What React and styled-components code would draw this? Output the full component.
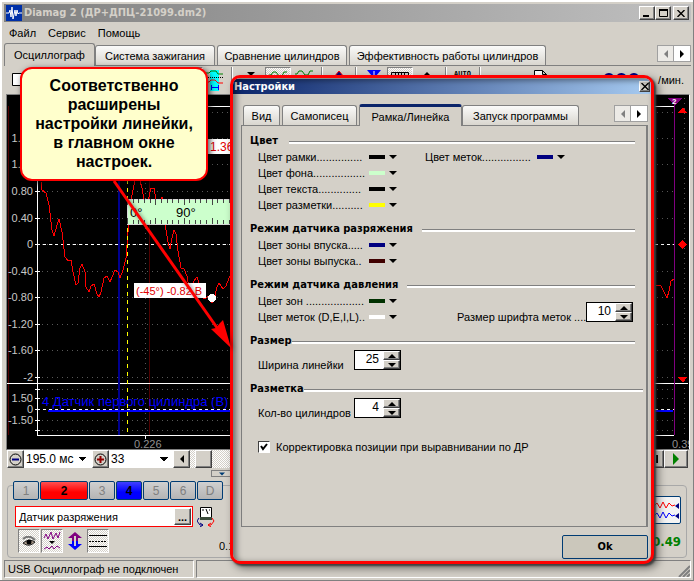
import React, { useState } from 'react';
import styled, { createGlobalStyle, css } from 'styled-components';

const theme = {
   face: '#d4d0c8',
   shadow: '#808080',
   dark: '#404040',
   navy: '#0a246a',
   red: '#ff0000',
   steel: '#003c74',
};

const uiFont = '"Liberation Sans", Arial, sans-serif';
const boldFont = '"DejaVu Sans Condensed", "DejaVu Sans", Verdana, sans-serif';

const raised = css`
   border: 1px solid;
   border-color: #fff ${theme.dark} ${theme.dark} #fff;
   box-shadow: inset -1px -1px 0 ${theme.shadow};
`;

const hatch = css`
   background: repeating-conic-gradient(#fff 0 25%, ${theme.face} 0 50%) 0 0 / 2px 2px;
`;

const GlobalStyle = createGlobalStyle`
   * { box-sizing: border-box; }
   body {
      margin: 0;
      background: ${theme.face};
      color: #000;
      font: 11px/16px ${uiFont};
   }
   button, input, select { font: inherit; color: inherit; }
   button { padding: 0; border: 0; background: ${theme.face}; }
   svg { display: block; }
`;

/* main window */

const Window = styled.div`
   position: relative;
   display: flex;
   flex-direction: column;
   min-height: 100vh;
   padding: 4px 2px 2px 4px;
   overflow: hidden;
   border: solid ${theme.shadow};
   border-width: 0 1px 1px 0;
   box-shadow: inset 0 2px 0 #fff, inset 2px 0 0 #fff;
`;

const TitleBar = styled.header`
   display: flex;
   align-items: center;
   height: 18px;
   padding: 0 2px;
   background: linear-gradient(90deg, #808080, #c0c0c0);
   color: ${theme.face};

   h1 {
      flex: 1;
      margin: 0 0 0 2px;
      font: bold 11px/18px ${boldFont};
      white-space: nowrap;
   }
`;

const CaptionButton = styled.button`
   ${raised};
   display: grid;
   place-items: center;
   width: 16px;
   height: 14px;
   background: ${theme.face};

   &:last-child {
      margin-left: 2px;
   }
`;

const Menu = styled.nav`
   display: flex;
   gap: 12px;
   height: 21px;
   padding: 3px 5px;

   a {
      color: #000;
      text-decoration: none;
   }
`;

const TabBar = styled.div`
   display: flex;
   align-items: flex-end;
   height: 23px;
   border-bottom: 1px solid ${theme.shadow};

   ${({ $dialog }) => $dialog && css`
      padding-left: 2px;
   `}
`;

const Tab = styled.button`
   flex: none;
   width: ${({ $w }) => $w}px;
   height: 20px;
   margin-right: 2px;
   border: 1px solid ${theme.shadow};
   border-bottom: 0;
   border-radius: 3px 3px 0 0;
   background: linear-gradient(#fafaf9, #d9d6cf);
   white-space: nowrap;

   ${({ $active }) => $active && css`
      height: 23px;
      margin: 0 0 -1px;
      background: ${theme.face};
   `}
   ${({ $active, $dialog }) => $active && $dialog && css`
      border-top: 3px solid ${theme.navy};
      height: 22px;
   `}
`;

const TabScroll = styled.div`
   display: flex;
   align-self: flex-start;
   margin: 2px 0 0 auto;

   button {
      display: grid;
      place-items: center;
      width: 17px;
      height: 17px;
      border: 1px solid #a0a0a0;
      background: #eceae6;
   }
   button + button {
      border-left: 0;
      background: #fff;
   }
`;

const Toolbar = styled.div`
   display: flex;
   align-items: flex-start;
   height: 28px;
   padding: 1px 0 0 3px;
   overflow: hidden;
`;

const Tool = styled.button`
   flex: none;
   width: ${({ $w }) => $w || 24}px;
   height: 26px;
   display: grid;
   place-items: start center;
   padding-top: 3px;

   ${({ $pressed }) => $pressed && css`
      ${hatch};
      border: 1px solid;
      border-color: ${theme.shadow} #fff #fff ${theme.shadow};
   `}
`;

const Divider = styled.span`
   flex: none;
   width: 2px;
   height: 24px;
   margin: 0 4px;
   border-left: 1px solid ${theme.shadow};
   border-right: 1px solid #fff;
`;

const Rpm = styled.output`
   flex: 1;
   display: flex;
   justify-content: flex-end;
   gap: 18px;
   padding-right: 7px;

   b {
      color: #000080;
      font: bold 18px/26px "DejaVu Sans", sans-serif;
   }
   span {
      line-height: 26px;
   }
`;

const Plot = styled.figure`
   margin: 0 1px 0 2px;
   border: 1px solid ${theme.shadow};
   border-right-color: #fff;
   background: #000;

   svg {
      width: 100%;
      height: auto;
   }
`;

const Transport = styled.div`
   display: flex;
   height: 19px;
   margin: 0 3px;
`;

const SmallButton = styled.button`
   ${raised};
   flex: none;
   display: grid;
   place-items: center;
   width: ${({ $w }) => $w || 17}px;
   height: 18px;
`;

const DropDown = styled.select`
   flex: none;
   width: ${({ $w }) => $w}px;
   height: 18px;
   padding: 0 2px;
   border: 0;
   border-radius: 0;
   appearance: none;
   font-size: 12px;
   background:
      linear-gradient(to top left, transparent 50%, #000 0) right 5px center / 4px 4px no-repeat,
      linear-gradient(to top right, transparent 50%, #000 0) right 9px center / 4px 4px no-repeat,
      #fff;
`;

const Track = styled.div`
   ${hatch};
   flex: 1;
   height: 18px;
   padding-left: 5px;
`;

const Splitter = styled.div`
   height: 11px;
   padding: 1px 0 0 207px;

   button {
      display: flex;
      align-items: center;
      justify-content: space-around;
      width: 40px;
      height: 7px;
      border: 1px solid ${theme.shadow};
   }
`;

/* channel controls */

const Channels = styled.section`
   position: relative;
   flex: 1;
   display: flex;
   margin: 5px 4px 2px 3px;
   padding: 20px 5px 3px 7px;
   border: 1px solid #a8a8a8;
   border-radius: 4px;
`;

const ChannelRow = styled.div`
   position: absolute;
   top: -5px;
   left: 5px;
   display: flex;
   gap: 1px;
   background: ${theme.face};
`;

const Channel = styled.button`
   width: ${({ $wide }) => ($wide ? 48 : 26)}px;
   height: 19px;
   border: 1px solid ${theme.steel};
   border-radius: 2px;
   background: ${({ $bg }) => $bg || 'linear-gradient(#d0d0d0, #b4b4b4)'};
   color: ${({ $bg }) => ($bg ? '#000' : theme.shadow)};
   font-size: 12px;
   font-weight: ${({ $bg }) => ($bg ? 'bold' : 'normal')};
`;

const ChannelSetup = styled.div`
   flex: 1;
`;

const SensorRow = styled.div`
   display: flex;
   gap: 4px;
   margin-bottom: 2px;
`;

const SensorBox = styled.div`
   display: flex;
   width: 178px;
   height: 21px;
   padding: 1px;
   border: 1px solid ${theme.red};
   background: #fff;

   input {
      flex: 1;
      min-width: 0;
      padding: 0 2px;
      border: 0;
      outline: 0;
   }
   button {
      height: 17px;
      font-weight: bold;
      line-height: 8px;
   }
`;

const ViewRow = styled.div`
   display: flex;
   gap: 1px;
   padding-left: 3px;

   ${Tool} {
      width: 22px;
      height: 24px;
      padding: 0;
      place-items: center;
   }
`;

const MinReading = styled.span`
   align-self: flex-end;
   margin-left: 109px;
   line-height: 13px;
   white-space: nowrap;
`;

const Readings = styled.div`
   display: flex;
   flex-direction: column;
   align-items: flex-end;
   justify-content: space-between;
   width: 48px;
   margin-top: -10px;

   b {
      color: #008000;
      font: bold 13px/24px ${boldFont};
   }
`;

const WaveButton = styled.button`
   width: 48px;
   height: 28px;
   border: 1px solid ${theme.steel};
   border-radius: 2px;
   background: #f4f4f4;
`;

const StatusBar = styled.footer`
   display: flex;
   gap: 2px;
   height: 18px;
`;

const StatusPane = styled.div`
   flex: ${({ $w }) => ($w ? `0 0 ${$w}px` : 1)};
   display: flex;
   justify-content: space-between;
   align-items: flex-end;
   padding-left: 3px;
   border: 1px solid;
   border-color: ${theme.shadow} #fff #fff ${theme.shadow};
   white-space: nowrap;
`;

/* settings dialog */

const Dialog = styled.section`
   position: absolute;
   top: 75px;
   left: 230px;
   right: 39px;
   padding: 1px 0 2px;
   overflow: hidden;
   border: 3px solid ${theme.red};
   border-radius: 10px;
   background: ${theme.face};
   box-shadow: 2px 2px 2px #404040, 4px 4px 8px rgba(0, 0, 0, 0.5);

   &::after {
      content: '';
      position: absolute;
      inset: 0;
      border-radius: 7px;
      box-shadow: inset 3px 2px 6px rgba(0, 0, 0, 0.5);
      pointer-events: none;
   }
`;

const DialogTitle = styled.header`
   display: flex;
   align-items: center;
   justify-content: space-between;
   height: 15px;
   padding: 0 1px;
   background: linear-gradient(90deg, ${theme.navy}, #a6caf0);
   color: #fff;

   h2 {
      margin: 0;
      font: bold 11px/15px ${boldFont};
   }
   ${CaptionButton} {
      width: 11px;
      height: 11px;
   }
`;

const DialogBody = styled.div`
   padding: 9px 3px 0 8px;
`;

const Panel = styled.div`
   min-height: 401px;
   padding: 7px 0 0 8px;
   border: 1px solid ${theme.shadow};
   border-top: 0;
   border-right-width: 2px;
`;

const Group = styled.section`
   margin-bottom: 8px;
`;

const GroupTitle = styled.h3`
   display: flex;
   align-items: center;
   gap: ${({ $gap }) => $gap}px;
   margin: 0 ${({ $end }) => $end || 11}px 0 0;
   font: bold 11px/16px ${boldFont};
   white-space: nowrap;

   &::after {
      content: '';
      flex: 1;
      height: 2px;
      margin-top: 3px;
      border-top: 1px solid ${theme.shadow};
      background: #fff;
   }
`;

const GroupBody = styled.div`
   display: flex;
   padding-left: 8px;
`;

const Column = styled.div`
   width: ${({ $w }) => ($w ? `${$w}px` : 'auto')};
`;

const ColorRow = styled.div`
   display: flex;
   align-items: center;
   height: 16px;

   label {
      width: ${({ $label }) => $label || 107}px;
      white-space: nowrap;
   }
`;

const ColorButton = styled.button`
   display: flex;
   align-items: center;
   gap: 4px;
   height: 16px;
   padding: 0 4px;

   &::before {
      content: '';
      width: 16px;
      height: 4px;
      background: ${({ $color }) => $color};
   }
`;

const Field = styled.div`
   display: flex;
   align-items: flex-end;
   height: ${({ $h }) => $h || 24}px;

   label {
      width: ${({ $label }) => $label}px;
      white-space: nowrap;
   }
`;

const Spinner = styled.div`
   display: flex;
   width: 47px;
   height: 20px;
   margin-bottom: 3px;
   border: 1px solid #000;
   background: #fff;

   input {
      flex: 1;
      min-width: 0;
      padding: 0 4px 2px 0;
      border: 0;
      outline: 0;
      font-size: 12px;
      text-align: right;
   }
   div {
      display: flex;
      flex-direction: column;
   }
   ${SmallButton} {
      height: 9px;
   }
`;

const CheckRow = styled.label`
   display: flex;
   align-items: center;
   gap: 6px;
   padding: 10px 0 0 8px;

   input {
      appearance: none;
      width: 12px;
      height: 12px;
      margin: 0;
      border: 1px solid;
      border-color: ${theme.dark} #fff #fff ${theme.dark};
      background: #fff;
   }
   input:checked {
      background: #fff url("data:image/svg+xml,%3Csvg xmlns='http://www.w3.org/2000/svg' viewBox='0 0 10 10'%3E%3Cpath d='M2 4l2 3 4-5' fill='none' stroke='black' stroke-width='2'/%3E%3C/svg%3E");
   }
`;

const OkRow = styled.div`
   display: flex;
   justify-content: flex-end;
   padding-top: 8px;
`;

const OkButton = styled.button`
   width: 86px;
   height: 24px;
   border: 1px solid ${theme.steel};
   border-radius: 2px;
   background: #cbc7bb;
   font: bold 11px/16px ${boldFont};
`;

/* callout over the plot */

const Callout = styled.aside`
   position: absolute;
   top: 67px;
   left: 20px;
   width: 188px;
   padding: 7px 7px 8px;
   border: 2px solid ${theme.red};
   border-radius: 12px;
   background: #ffffcc;
   box-shadow: 2px 2px 6px rgba(0, 0, 0, 0.7);
   font-size: 16px;
   font-weight: bold;
   line-height: 19px;
   text-align: center;
`;

const Arrow = styled.svg`
   position: absolute;
   top: 178px;
   left: 110px;
   filter: drop-shadow(2px 2px 2px rgba(0, 0, 0, 0.5));
`;

const Triangle = ({ dir = 'down', size = 8, color = '#000' }) => {
   const shapes = {
      down: 'M0 2h8l-4 4z',
      up: 'M0 6h8l-4-4z',
      left: 'M6 0v8l-4-4z',
      right: 'M2 0v8l4-4z',
   };
   return (
      <svg width={size} height={size} viewBox="0 0 8 8" aria-hidden="true">
         <path d={shapes[dir]} fill={color}/>
      </svg>
   );
};

const AppIcon = () => (
   <svg width="16" height="16" viewBox="0 0 16 16">
      <path fill="#0030a8" d="M0 0h16v16H0z"/>
      <path fill="none" stroke="#fff" d="M0 8h3l1-3 1 7 1-10 1 12 2-9 1 6 1-6 1 4 1-1h3"/>
   </svg>
);

const Close = () => (
   <svg width="8" height="7" viewBox="0 0 8 7">
      <path d="M.5 0l7 7m0-7l-7 7" stroke="#000" strokeWidth="1.4"/>
   </svg>
);

const ZoomIcon = ({ plus }) => (
   <svg width="13" height="13" viewBox="0 0 13 13">
      <circle cx="6.5" cy="6.5" r="5.5" fill="none" stroke="#000"/>
      <path d={plus ? 'M3 6.5h7M6.5 3v7' : 'M3 6.5h7'} stroke={plus ? '#900000' : '#000080'} strokeWidth="2"/>
   </svg>
);

const WavesIcon = ({ colors = ['#008000', '#008000'] }) => (
   <svg width="18" height="20" viewBox="0 0 18 20">
      <path d="M0 4h2l2-3h3l3 4h3l2-4h3" fill="none" stroke={colors[0]}/>
      <path d="M0 14h2l2-3 3 4h3l2-4 2 3h4" fill="none" stroke={colors[1]}/>
   </svg>
);

const ticks = [
   ['1.60', 138], ['1.20', 164], ['0.80', 191], ['0.40', 218], ['0', 244],
   ['-0.40', 271], ['-0.80', 297], ['-1.20', 324], ['-1.60', 350], ['-2', 377],
];
const lowTicks = [['', 389], ['1.50', 398], ['0', 409], ['-1.50', 420], ['', 430]];
const rulerTicks = Array.from({ length: 19 }, (_, i) => i);

const Oscillogram = () => (
   <Plot>
      <svg viewBox="7 95 682 354" fontFamily="Liberation Sans, Arial, sans-serif" fontSize="11" shapeRendering="crispEdges">
         <path d="M8.5 106v329M149.5 106v329" stroke="#500000"/>
         <g stroke="#585858" strokeDasharray="1 4">
            {[112, ...ticks.map((t) => t[1]), 389, 398, 420, 430].map((y) => (
               <path key={y} d={`M42 ${y}.5h632`}/>
            ))}
            <path d="M145.5 108v326M684.5 98v338"/>
         </g>
         <path d="M37.5 106v277M37 106.5h637M7 383.5h681M37 435.5h637M145.5 435v4" stroke="#fff" fill="none"/>
         <path d="M37.5 384v51" stroke="#fff"/>
         <g fill="#c8c8c8" textAnchor="end">
            {[...ticks, ...lowTicks].map(([label, y]) => (
               <g key={y}>
                  <path d={`M35 ${y}.5h5`} stroke="#fff"/>
                  <text x="33" y={y + 4}>{label}</text>
               </g>
            ))}
         </g>
         <path d="M118.5 100v335" stroke="#000090" strokeWidth="2"/>
         <text x="42" y="406" fill="#0000ff" fontSize="13">4 Датчик первого цилиндра (В)</text>
         <path d="M48 410.5h625" stroke="#0000ff" strokeWidth="2"/>
         <path d="M37 409.5h637M37 244.5h637" stroke="#fff" strokeDasharray="3 3"/>
         <path
            d="M41 182l1 8 4 3 3 12 3 25 2 6 3-11 2-6 3 13 3 25 3 4 3-1 2 12 3 13 2-2 2-15 2-4 3 8 1 15 3 5 2-6 3-2 3 10 2 3 2-5 3-14 3-2 3 6 2-5 3-7 3 2 2 6 3-8 3-12 2-26 2-27 3-15 4-20 5 18 3 19 3-6 3-13 3 0 3 17 2-3 3-5 2 8 2 25 2 12 2 7 2-11 2-8 2 4 2 17 3 17 3 1 3 7 2 12 2 6 3-13 3-4 3 9 3 12 3 0 2-2 4 7 2-3 3-13 2-4 4 6 3-3 3-8 2-4M656 285l5 1 3 6 3 6 2-7 2-10 3-2"
            fill="none"
            stroke="#f00"
         />
         <path d="M127.5 100v335" stroke="#ff0" strokeDasharray="4 4"/>
         <path d="M127 199h140v25h-140z" fill="#cfc" stroke="#d8d8d8"/>
         {rulerTicks.map((i) => {
            const x = 127 + Math.round(i * 5.65);
            const len = i % 5 === 0 ? 6 : 4;
            return <path key={i} d={`M${x}.5 199v${len}M${x}.5 224v-${len}`} stroke="#444"/>;
         })}
         <g fontSize="13">
            <text x="130" y="217">0°</text>
            <text x="176" y="217">90°</text>
         </g>
         <path d="M208 139h30v15h-30zM134 283h72v15h-72z" fill="#fff"/>
         <g fill="#e00000" fontSize="12">
            <text x="210" y="151">1.36</text>
            <text x="136" y="295" fontSize="11">(-45°) -0.82 В</text>
         </g>
         <circle cx="212" cy="298" r="4" fill="#fff"/>
         <path d="M674.5 98v337" stroke="#800080"/>
         <path d="M667 98h15l-7 7z" fill="#800080"/>
         <text x="672" y="104" fill="#fff" fontSize="8" fontWeight="bold">2</text>
         <path d="M678 113h9l-4-6zM678 244.500l4.500-4.500 4.500 4.500-4.500 4.500zM678 377h9l-4 6z" fill="#f00"/>
         <g fill="#909090">
            <text x="134" y="448">0.226</text>
            <text x="672" y="448">0.39</text>
         </g>
      </svg>
   </Plot>
);

const Tools = () => (
   <Toolbar>
      <Tool aria-label="Новый">
         <svg width="14" height="16"><path d="M.5 3.500h13v12H.5z" fill="#fff" stroke="#000"/></svg>
      </Tool>
      <Tool $w={142} tabIndex={-1} aria-label="Файл"/>
      <Tool $w={30} $pressed aria-label="Каналы"/>
      <Tool aria-label="Масштаб">
         <svg width="18" height="21">
            <path d="M4 0h9v21H4z" fill="#0ff"/>
            <path d="M0 3h3l2-2h5l2 3h5" fill="none" stroke="#008000"/>
            <path d="M0 7.500h18" stroke="#000" strokeDasharray="1 1"/>
            <path d="M0 12h3l2-2h4l3 3h5" fill="none" stroke="#f00"/>
            <path d="M5 17.500h8M5.500 15v5M12.500 15v5" stroke="#00f"/>
         </svg>
      </Tool>
      <Divider/>
      <Tool $w={28} aria-label="Вниз"><Triangle/></Tool>
      <Tool $w={26} $pressed aria-label="Кривые"><WavesIcon/></Tool>
      <Tool $w={26} aria-label="Все кривые"><WavesIcon/></Tool>
      <Divider/>
      <Tool aria-label="Метка">
         <svg width="14" height="14"><path d="M2 7l5-6 5 6z" fill="#000080" stroke="#f00"/></svg>
      </Tool>
      <Divider/>
      <Tool $w={26} aria-label="Фильтр">
         <svg width="14" height="14"><path d="M0 0h14L9 6v6H5V6z" fill="#00f"/><path d="M7 1v4" stroke="#fff"/></svg>
      </Tool>
      <Tool $w={26} $pressed aria-label="Линейка">
         <svg width="18" height="14"><path d="M.5 1.500h17v9H.5zM4.500 2v4M7.500 2v4M10.500 2v4M13.500 2v4" fill="#ccc" stroke="#000"/></svg>
      </Tool>
      <Tool $w={28} aria-label="Вверх"><Triangle dir="up"/></Tool>
      <Divider/>
      <Tool aria-label="Авто">
         <svg width="18" height="10"><text x="0" y="6" fontSize="7" fontWeight="bold" fontFamily="DejaVu Sans Mono, monospace">AUTO</text></svg>
      </Tool>
      <Divider/>
      <Tool $w={112} aria-label="Страница">
         <svg width="14" height="16"><path d="M.5.500h8l4 4v11H.5zM8.500.500v4h4" fill="#fff" stroke="#000"/></svg>
      </Tool>
      <Rpm><b>000</b><span>/мин.</span></Rpm>
   </Toolbar>
);

const ColorSetting = ({ id, label, color, width }) => (
   <ColorRow $label={width}>
      <label htmlFor={id}>{label}</label>
      <ColorButton id={id} $color={color}><Triangle/></ColorButton>
   </ColorRow>
);

const NumberSetting = ({ id, label, initial, width, height }) => {
   const [value, setValue] = useState(initial);
   return (
      <Field $label={width} $h={height}>
         <label htmlFor={id}>{label}</label>
         <Spinner>
            <input id={id} value={value} onChange={(e) => setValue(Number(e.target.value) || 0)}/>
            <div>
               <SmallButton aria-label="Больше" onClick={() => setValue(value + 1)}><Triangle dir="up"/></SmallButton>
               <SmallButton aria-label="Меньше" onClick={() => setValue(value - 1)}><Triangle/></SmallButton>
            </div>
         </Spinner>
      </Field>
   );
};

const Settings = () => (
   <Dialog role="dialog" aria-labelledby="settings-title">
      <DialogTitle>
         <h2 id="settings-title">Настройки</h2>
         <CaptionButton aria-label="Закрыть настройки"><Close/></CaptionButton>
      </DialogTitle>
      <DialogBody>
         <TabBar $dialog>
            <Tab $w={37}>Вид</Tab>
            <Tab $w={75}>Самописец</Tab>
            <Tab $w={103} $active $dialog>Рамка/Линейка</Tab>
            <Tab $w={117}>Запуск программы</Tab>
            <TabScroll>
               <button aria-label="Назад"><Triangle dir="left" color="#808080"/></button>
               <button aria-label="Вперёд"><Triangle dir="right"/></button>
            </TabScroll>
         </TabBar>
         <Panel>
            <Group>
               <GroupTitle $gap={11}>Цвет</GroupTitle>
               <GroupBody>
                  <Column $w={167}>
                     <ColorSetting id="frame" label="Цвет рамки..............." color="#000"/>
                     <ColorSetting id="back" label="Цвет фона................." color="#ccffcc"/>
                     <ColorSetting id="text" label="Цвет текста.............." color="#000"/>
                     <ColorSetting id="marks" label="Цвет разметки.........." color="#ffff00"/>
                  </Column>
                  <Column>
                     <ColorSetting id="labels" label="Цвет меток................" color="#000080" width={108}/>
                  </Column>
               </GroupBody>
            </Group>
            <Group>
               <GroupTitle $gap={9}>Режим датчика разряжения</GroupTitle>
               <GroupBody>
                  <Column>
                     <ColorSetting id="intake" label="Цвет зоны впуска....." color="#000080"/>
                     <ColorSetting id="exhaust" label="Цвет зоны выпуска.." color="#400000"/>
                  </Column>
               </GroupBody>
            </Group>
            <Group>
               <GroupTitle $gap={9}>Режим датчика давления</GroupTitle>
               <GroupBody>
                  <Column $w={199}>
                     <ColorSetting id="zones" label="Цвет зон ..................." color="#003000"/>
                     <ColorSetting id="letters" label="Цвет меток (D,E,I,L).." color="#fff"/>
                  </Column>
                  <NumberSetting id="font" label="Размер шрифта меток ...." initial={10} width={129} height={32}/>
               </GroupBody>
            </Group>
            <Group>
               <GroupTitle $gap={0}>Размер</GroupTitle>
               <GroupBody>
                  <NumberSetting id="width" label="Ширина линейки" initial={25} width={96}/>
               </GroupBody>
            </Group>
            <Group>
               <GroupTitle $gap={0} $end={3}>Разметка</GroupTitle>
               <GroupBody>
                  <NumberSetting id="cylinders" label="Кол-во цилиндров" initial={4} width={96}/>
               </GroupBody>
            </Group>
            <CheckRow>
               <input type="checkbox" defaultChecked/>
               Корректировка позиции при выравнивании по ДР
            </CheckRow>
         </Panel>
         <OkRow>
            <OkButton>Ok</OkButton>
         </OkRow>
      </DialogBody>
   </Dialog>
);

const ChannelPanel = () => (
   <Channels>
      <ChannelRow>
         <Channel>1</Channel>
         <Channel $wide $bg="linear-gradient(#ff5050, #f00 60%)">2</Channel>
         <Channel>3</Channel>
         <Channel $bg="linear-gradient(#4040ff, #00f 60%)">4</Channel>
         <Channel>5</Channel>
         <Channel>6</Channel>
         <Channel>D</Channel>
      </ChannelRow>
      <ChannelSetup>
         <SensorRow>
            <SensorBox>
               <input aria-label="Датчик" defaultValue="Датчик разряжения"/>
               <SmallButton aria-label="Выбрать датчик">...</SmallButton>
            </SensorBox>
            <svg width="18" height="21" viewBox="0 0 18 21">
               <path d="M3.500 1.500h11v12h-11z" fill="#fff" stroke="#000"/>
               <path d="M3 11h12v3H3z" fill="#3a4a3a"/>
               <path d="M5 4h2M9 3l2 5M12 4h1" stroke="#000"/>
               <path d="M2 12L0 15l3 4h3M3 17l3 2-3 2" fill="none" stroke="#000080"/>
               <path d="M15 12l2 3-3 4h-3M14 17l-3 2 3 2" fill="none" stroke="#f00"/>
            </svg>
         </SensorRow>
         <ViewRow>
            <Tool $pressed aria-label="Показать">
               <svg width="14" height="11" viewBox="0 0 14 11">
                  <path d="M1 3q6-5 12 1" fill="none" stroke="#777" strokeWidth="2"/>
                  <path d="M1 7q6-5 12-1-6 6-12 1z" fill="#a98" stroke="#222"/>
                  <circle cx="7" cy="6" r="2.500"/>
               </svg>
            </Tool>
            <Tool $pressed aria-label="Сглаживание">
               <svg width="18" height="20" viewBox="0 0 18 20" fill="none" stroke="#800080">
                  <path d="M1 7l2-4 2 5 3-7 2 7 3-6 2 5 2-6"/>
                  <path d="M1 18l3-2 2 2 3-3 2 3 3-3 3 2"/>
                  <path d="M6 10h6l-3 3z" fill="#000" stroke="none"/>
               </svg>
            </Tool>
            <Tool aria-label="Масштаб по вертикали">
               <svg width="14" height="18" viewBox="0 0 14 18">
                  <path d="M7 0l7 6h-4v3H4V6H0z" fill="#800080"/>
                  <path d="M7 18l7-6h-4V9H4v3H0z" fill="#00f"/>
                  <path d="M7 4v10" stroke="#d4d0c8" strokeWidth="2"/>
               </svg>
            </Tool>
            <Tool $pressed aria-label="Линии">
               <svg width="18" height="14">
                  <path d="M0 1.500h18M0 12.500h18" stroke="#000"/>
                  <path d="M0 7.500h18" stroke="#000" strokeDasharray="2 1"/>
               </svg>
            </Tool>
            <MinReading>0.10</MinReading>
         </ViewRow>
      </ChannelSetup>
      <Readings>
         <WaveButton aria-label="Сравнить">
            <svg width="46" height="24" fill="none">
               <path d="M0 8h20l3-3 3 5 3-6 3 6 3-5 3 3 3-1" stroke="#f00"/>
               <path d="M0 18h20l3-3 3 5 3-6 3 6 3-5 3 3 3-1" stroke="#00f"/>
               <path d="M45 5v6l-4-3zM45 15v6l-4-3z" fill="#000080"/>
            </svg>
         </WaveButton>
         <b>0.49</b>
      </Readings>
   </Channels>
);

const App = () => (
   <>
      <GlobalStyle/>
      <Window>
         <TitleBar>
            <AppIcon/>
            <h1>Diamag 2 (ДР+ДПЦ-21099.dm2)</h1>
            <CaptionButton aria-label="Свернуть">
               <svg width="8" height="8"><path d="M0 6h6v2H0z"/></svg>
            </CaptionButton>
            <CaptionButton aria-label="Развернуть">
               <svg width="9" height="8"><path d="M.5 1h8v6.500h-8z" fill="none" stroke="#000"/><path d="M0 0h9v2H0z"/></svg>
            </CaptionButton>
            <CaptionButton aria-label="Закрыть"><Close/></CaptionButton>
         </TitleBar>
         <Menu>
            <a href="#file">Файл</a>
            <a href="#service">Сервис</a>
            <a href="#help">Помощь</a>
         </Menu>
         <TabBar>
            <Tab $w={91} $active>Осциллограф</Tab>
            <Tab $w={120}>Система зажигания</Tab>
            <Tab $w={130}>Сравнение цилиндров</Tab>
            <Tab $w={197}>Эффективность работы цилиндров</Tab>
            <TabScroll>
               <button aria-label="Назад"><Triangle dir="left" color="#808080"/></button>
               <button aria-label="Вперёд"><Triangle dir="right"/></button>
            </TabScroll>
         </TabBar>
         <Tools/>
         <Oscillogram/>
         <Transport>
            <SmallButton aria-label="Уменьшить"><ZoomIcon/></SmallButton>
            <DropDown $w={68} aria-label="Развёртка"><option>195.0 мс</option></DropDown>
            <SmallButton aria-label="Увеличить"><ZoomIcon plus/></SmallButton>
            <DropDown $w={64} aria-label="Кадр"><option>33</option></DropDown>
            <SmallButton aria-label="Влево"><Triangle dir="left"/></SmallButton>
            <Track><SmallButton aria-label="Положение"/></Track>
            <SmallButton aria-label="Пауза">
               <svg width="8" height="8"><path d="M0 0h2v8H0zM4 0h2v8H4z"/></svg>
            </SmallButton>
            <SmallButton $w={24} aria-label="Пуск"><Triangle dir="right" size={12} color="#008000"/></SmallButton>
         </Transport>
         <Splitter>
            <button aria-label="Свернуть панель"><Triangle size={6} color="#003c74"/><Triangle size={6} color="#003c74"/></button>
         </Splitter>
         <ChannelPanel/>
         <StatusBar>
            <StatusPane $w={190}>USB Осциллограф не подключен</StatusPane>
            <StatusPane>
               <span/>
               <svg width="12" height="12"><path d="M1 12L12 1M5 12l7-7M9 12l3-3" stroke="#808080" strokeWidth="2"/></svg>
            </StatusPane>
         </StatusBar>
         <Settings/>
         <Callout>Соответственно<br/>расширены<br/>настройки линейки,<br/>в главном окне<br/>настроек.</Callout>
         <Arrow width="130" height="175" viewBox="110 178 130 175">
            <path d="M114 181L220 332" stroke="#f00" strokeWidth="3"/>
            <path d="M231 348l-20-19 5-1 4-5 3-3z" fill="#f00"/>
         </Arrow>
      </Window>
   </>
);

export default App;
